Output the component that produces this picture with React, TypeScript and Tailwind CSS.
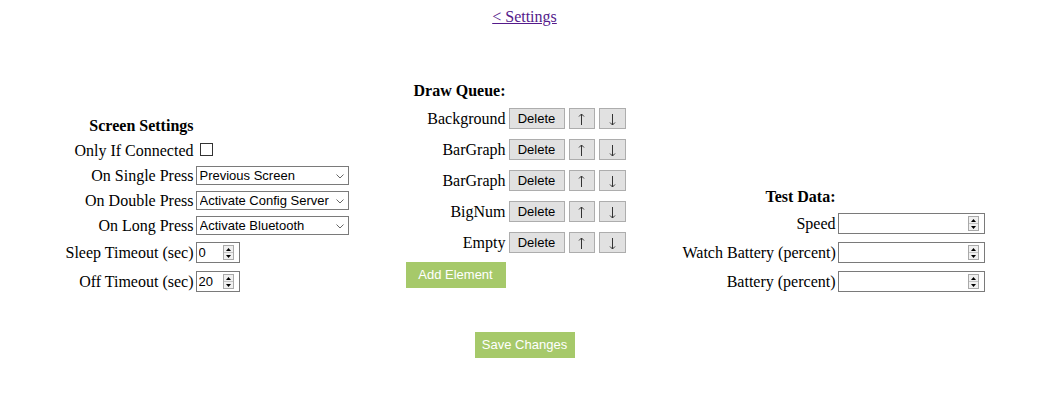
// Settings page - screen settings, draw queue and test data, laid out like the old table form
import { useState } from 'react';

const serif = "font-['Liberation_Serif','Times_New_Roman',serif]";
const sans = "font-['Liberation_Sans',Arial,sans-serif]";

function Spinner() {
  return (
    <div className="mr-[5px] flex h-[15px] w-[11px] shrink-0 flex-col border border-[#a9a9a9] bg-[#f0f0f0]">
      <div className="flex flex-1 items-center justify-center border-b border-[#c4c4c4]">
        <svg width="5" height="3" viewBox="0 0 5 3"><path d="M2.5 0L5 3H0z" fill="#000" /></svg>
      </div>
      <div className="flex flex-1 items-center justify-center">
        <svg width="5" height="3" viewBox="0 0 5 3"><path d="M0 0h5L2.5 3z" fill="#000" /></svg>
      </div>
    </div>
  );
}

function NumberBox({ value, width }: { value: string; width: string }) {
  return (
    <div className={`flex h-[21px] items-center border border-[#7a7a7a] bg-white ${width}`}>
      <input
        defaultValue={value}
        className={`${sans} min-w-0 flex-1 bg-transparent pl-[2px] text-[13px] text-black outline-none`}
      />
      <Spinner />
    </div>
  );
}

function SelectBox({ options, value }: { options: string[]; value: string }) {
  return (
    <div className="relative flex h-[19px] w-[153px] items-center">
      <select
        defaultValue={value}
        className={`${sans} block h-[19px] w-full appearance-none border border-[#7a7a7a] bg-white py-0 pl-[3px] text-[13px] leading-[15px] text-black outline-none`}
      >
        {options.map((o) => (
          <option key={o}>{o}</option>
        ))}
      </select>
      <svg
        className="pointer-events-none absolute right-[5px] top-[8px]"
        width="8"
        height="5"
        viewBox="0 0 8 5"
      >
        <path d="M0.5 0.5L4 4L7.5 0.5" fill="none" stroke="#666" strokeWidth="1" />
      </svg>
    </div>
  );
}

const actions = ['Previous Screen', 'Next Screen', 'Activate Config Server', 'Activate Bluetooth', 'Nothing'];

function GrayButton({ children, width }: { children: React.ReactNode; width: string }) {
  return (
    <button
      className={`${sans} flex h-[21px] items-center justify-center border border-[#adadad] bg-[#e1e1e1] text-[13px] text-black ${width}`}
    >
      {children}
    </button>
  );
}

function Arrow({ down = false }: { down?: boolean }) {
  return (
    <svg width="7" height="12" viewBox="0 0 7 12" className={down ? 'mt-[3px] rotate-180' : 'mt-[1px]'}>
      <path d="M3.5 1V12M1 3.5L3.5 1L6 3.5" fill="none" stroke="#333" strokeWidth="1" />
    </svg>
  );
}

export default function App() {
  const [connected, setConnected] = useState(false);
  const queue = ['Background', 'BarGraph', 'BarGraph', 'BigNum', 'Empty'];

  const leftRows: { label: string; control: React.ReactNode; h: string }[] = [
    {
      label: 'Only If Connected',
      h: 'h-[25px]',
      control: (
        <button
          onClick={() => setConnected(!connected)}
          className="ml-[4px] mb-[2px] flex h-[13px] w-[13px] items-center justify-center border border-[#333] bg-white"
        >
          {connected && <span className="text-[10px] leading-none">✓</span>}
        </button>
      ),
    },
    { label: 'On Single Press', h: 'h-[25px]', control: <SelectBox options={actions} value="Previous Screen" /> },
    { label: 'On Double Press', h: 'h-[25px]', control: <SelectBox options={actions} value="Activate Config Server" /> },
    { label: 'On Long Press', h: 'h-[25px]', control: <SelectBox options={actions} value="Activate Bluetooth" /> },
    { label: 'Sleep Timeout (sec)', h: 'h-[29px]', control: <NumberBox value="0" width="w-[44px]" /> },
    { label: 'Off Timeout (sec)', h: 'h-[29px]', control: <NumberBox value="20" width="w-[44px]" /> },
  ];

  const testRows = ['Speed', 'Watch Battery (percent)', 'Battery (percent)'];

  return (
    <div className={`${serif} min-h-[420px] w-full bg-white text-[16px] text-black`}>
      {/* back link */}
      <div className="pl-[12px] pt-[8px] text-center leading-[18px]">
        <a href="#" className="text-[#551a8b] underline">
          &lt; Settings
        </a>
      </div>

      {/* three panels */}
      <div className="mx-auto mt-[52px] flex w-fit items-end gap-[57px] pl-[5px]">
        {/* Screen settings */}
        <div className="flex flex-col">
          <div className="flex h-[25px] items-center">
            <div className="w-[136px] text-right font-bold">Screen Settings</div>
          </div>
          {leftRows.map((r) => (
            <div key={r.label} className={`flex items-center gap-[2px] ${r.h}`}>
              <div className="w-[136px] whitespace-nowrap text-right">{r.label}</div>
              {r.control}
            </div>
          ))}
        </div>

        {/* Draw queue */}
        <div className="flex flex-col">
          <div className="flex h-[25px] items-center">
            <div className="w-[100px] whitespace-nowrap text-right font-bold">Draw Queue:</div>
          </div>
          {queue.map((q, i) => (
            <div key={i} className="flex h-[31px] items-center">
              <div className="w-[100px] text-right">{q}</div>
              <div className="ml-[3px]">
                <GrayButton width="w-[56px]">Delete</GrayButton>
              </div>
              <div className="ml-[4px]">
                <GrayButton width="w-[26px]">
                  <Arrow />
                </GrayButton>
              </div>
              <div className="ml-[4px]">
                <GrayButton width="w-[27px]">
                  <Arrow down />
                </GrayButton>
              </div>
            </div>
          ))}
          <div className="h-[38px] pt-[4px]">
            <button className={`${sans} h-[26px] w-[100px] bg-[#a6c96a] text-[13px] text-white`}>Add Element</button>
          </div>
        </div>

        {/* Test data */}
        <div className="flex flex-col">
          <div className="flex h-[25px] items-center">
            <div className="w-[153px] text-right font-bold">Test Data:</div>
          </div>
          {testRows.map((t) => (
            <div key={t} className="flex h-[29px] items-center gap-[2px]">
              <div className="w-[153px] whitespace-nowrap text-right">{t}</div>
              <NumberBox value="" width="w-[147px]" />
            </div>
          ))}
        </div>
      </div>

      {/* save */}
      <div className="mt-[36px] flex justify-center pl-[12px]">
        <button className={`${sans} h-[26px] w-[100px] bg-[#a6c96a] text-[13px] text-white`}>Save Changes</button>
      </div>
    </div>
  );
}
